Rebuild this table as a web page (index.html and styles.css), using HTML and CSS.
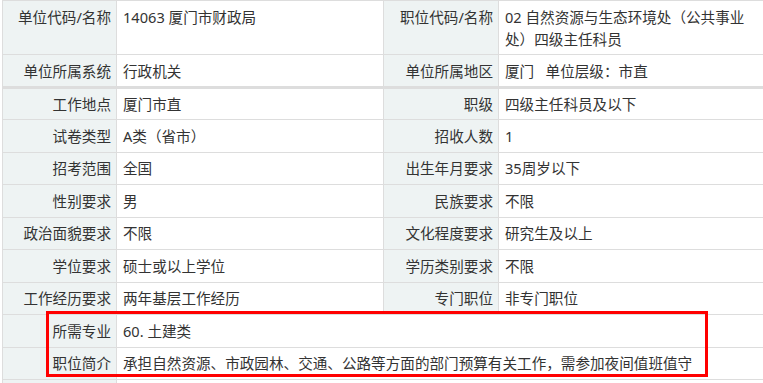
FILE: index.html
```html
<!DOCTYPE html>
<html lang="zh">
<head>
<meta charset="utf-8">
<title>职位详情</title>
<link rel="stylesheet" href="styles.css">
</head>
<body>
<div class="page">
  <div class="grid">
    <div class="k top">单位代码/名称</div><div class="v top">14063 厦门市财政局</div>
    <div class="k top">职位代码/名称</div><div class="v top">02 自然资源与生态环境处（公共事业处）四级主任科员</div>

    <div class="k sep">单位所属系统</div><div class="v sep">行政机关</div>
    <div class="k sep">单位所属地区</div><div class="v sep">厦门&nbsp;&nbsp;&nbsp;单位层级：市直</div>

    <div class="k">工作地点</div><div class="v">厦门市直</div><div class="k">职级</div><div class="v">四级主任科员及以下</div>
    <div class="k">试卷类型</div><div class="v">A类（省市）</div><div class="k">招收人数</div><div class="v">1</div>
    <div class="k">招考范围</div><div class="v">全国</div><div class="k">出生年月要求</div><div class="v">35周岁以下</div>
    <div class="k">性别要求</div><div class="v">男</div><div class="k">民族要求</div><div class="v">不限</div>
    <div class="k">政治面貌要求</div><div class="v">不限</div><div class="k">文化程度要求</div><div class="v">研究生及以上</div>
    <div class="k">学位要求</div><div class="v">硕士或以上学位</div><div class="k">学历类别要求</div><div class="v">不限</div>
    <div class="k">工作经历要求</div><div class="v">两年基层工作经历</div><div class="k">专门职位</div><div class="v">非专门职位</div>
    <div class="k">所需专业</div><div class="v wide">60. 土建类</div>
    <div class="k">职位简介</div><div class="v wide">承担自然资源、市政园林、交通、公路等方面的部门预算有关工作，需参加夜间值班值守</div>
    <div class="k"></div><div class="v wide"></div>
  </div>
  <div class="highlight"></div>
</div>
</body>
</html>
```
FILE: styles.css
```css
html, body {
  margin: 0;
  padding: 0;
  background: #fff;
  overflow: hidden;
}
.page {
  position: relative;
  width: 763px;
  height: 383px;
  overflow: hidden;
  padding-left: 2px;
  box-sizing: border-box;
}
.grid {
  display: grid;
  width: 766px;
  grid-template-columns: 114px 267px 115px 1fr;
  grid-template-rows: 54px 34px 31px repeat(9, 32.5px);
  border-top: 1px solid #ddd;
  border-left: 1px solid #ddd;
  font-family: "Noto Sans", "Noto Sans CJK SC", sans-serif;
  font-size: 14.6px;
  line-height: 22px;
  color: #333;
}
.k,
.v {
  display: flex;
  align-items: center;
  border-right: 1px solid #ddd;
  border-bottom: 1px solid #ddd;
  min-width: 0;
}
.k {
  background: #eef3f3;
  justify-content: flex-end;
  padding: 0 5px 0 6px;
  white-space: nowrap;
}
.v {
  padding: 0 6px;
}
.top {
  align-items: flex-start;
  padding-top: 4.5px;
}
.sep {
  border-bottom-width: 3px;
}
.wide {
  grid-column: span 3;
}
.highlight {
  position: absolute;
  left: 46px;
  top: 311px;
  width: 662px;
  height: 66px;
  border: 3px solid #f00;
  box-sizing: border-box;
}
```
